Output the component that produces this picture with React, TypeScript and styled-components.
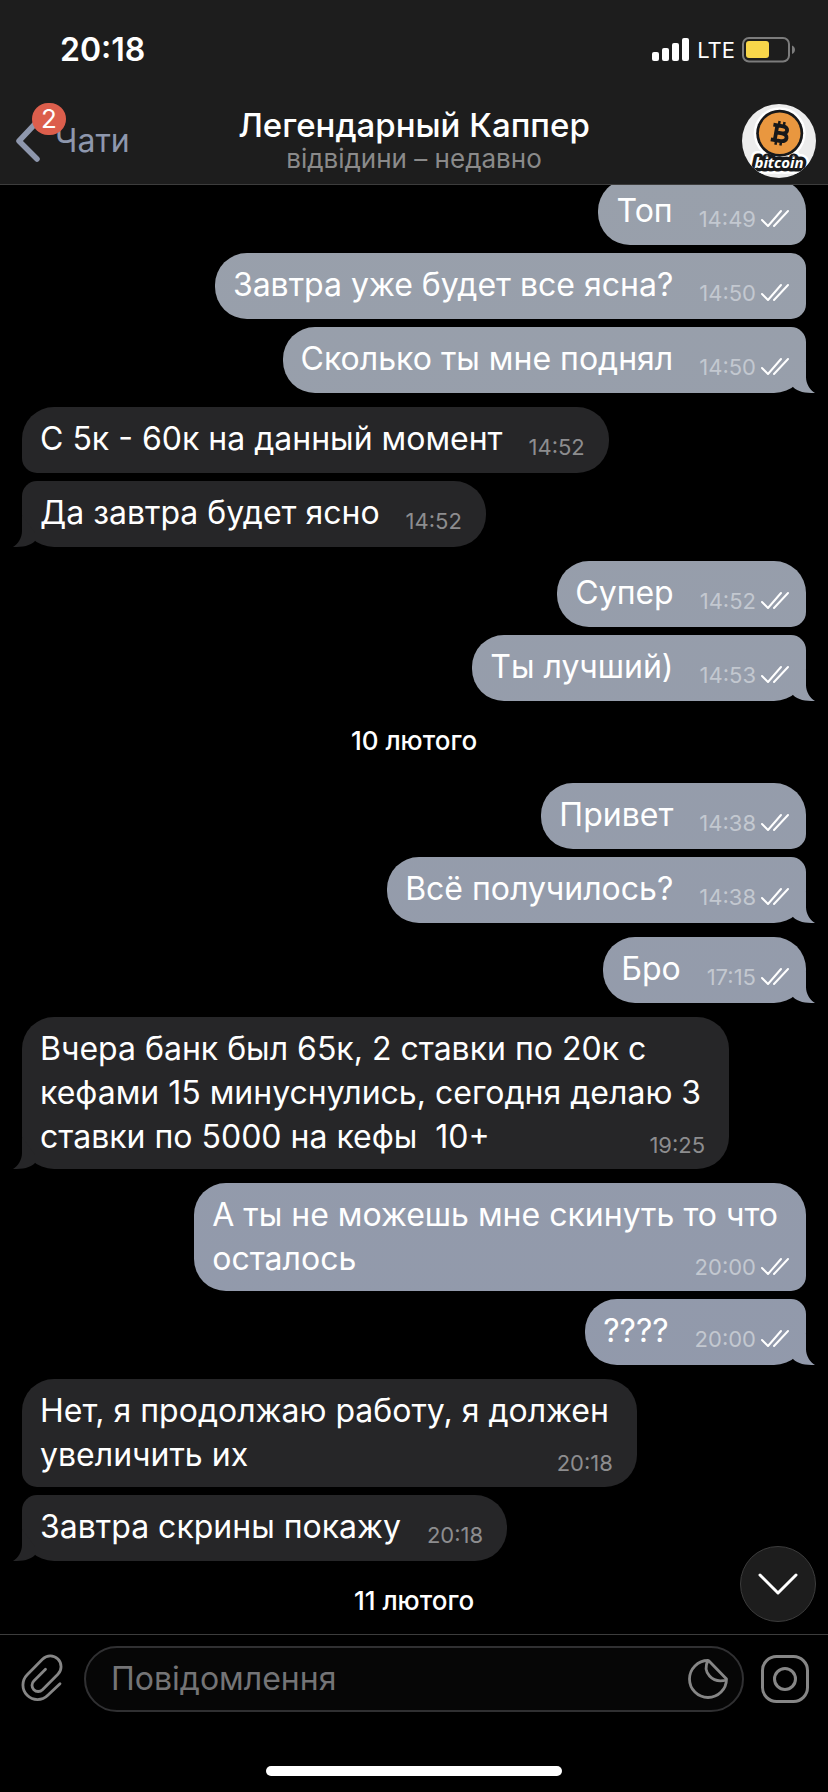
import React from "react";
import styled, { createGlobalStyle, css } from "styled-components";

const GlobalStyle = createGlobalStyle`
  *, *::before, *::after { box-sizing: border-box; }
  body { margin: 0; background: #000; }
  button, input { font: inherit; }
`;

const outgoingFill = "linear-gradient(180deg, #9aa1ab 0%, #8f97ab 100%) fixed";
const incomingFill = "#262628";

const Screen = styled.div`
  display: flex;
  flex-direction: column;
  height: 100vh;
  overflow: hidden;
  background: #000;
  color: #fff;
  font-family: Inter, "Liberation Sans", sans-serif;
  font-size: 32px;
  line-height: 44px;
`;

const TopBar = styled.header`
  flex: none;
  background: #1d1d1d;
  border-bottom: 1px solid #3d3d3d;
`;

const StatusBar = styled.div`
  display: flex;
  align-items: center;
  justify-content: space-between;
  height: 98px;
  padding: 2px 32px 0 60px;
`;

const Clock = styled.time`
  font-weight: 600;
`;

const StatusIcons = styled.div`
  display: flex;
  align-items: center;
  gap: 7px;
  font-size: 22px;
`;

const NavBar = styled.nav`
  display: grid;
  grid-template-columns: 1fr auto 1fr;
  align-items: center;
  height: 86px;
  padding: 0 12px;
`;

const BackButton = styled.button`
  position: relative;
  display: flex;
  align-items: center;
  justify-self: start;
  gap: 14px;
  padding: 0 0 0 2px;
  border: 0;
  background: none;
  color: #8e97ad;
  line-height: 44px;
`;

const Badge = styled.span`
  position: absolute;
  left: 20px;
  bottom: 28px;
  min-width: 34px;
  height: 32px;
  border-radius: 16px;
  background: #dc5e4c;
  color: #fff;
  font-size: 26px;
  line-height: 32px;
  text-align: center;
`;

const Heading = styled.div`
  text-align: center;
`;

const Title = styled.h1`
  margin: 0;
  font-size: 33px;
  font-weight: 500;
  line-height: 36px;
`;

const Subtitle = styled.p`
  margin: 0;
  color: #8a8a8a;
  font-size: 26px;
  line-height: 32px;
`;

const AvatarLink = styled.a`
  justify-self: end;
  display: flex;
`;

const History = styled.main`
  position: relative;
  flex: 1;
  min-height: 0;
  display: flex;
  flex-direction: column;
  justify-content: flex-end;
  padding: 0 22px 11px;
  overflow: hidden;
`;

const DateLabel = styled.h2`
  flex: none;
  margin: 4px 0 20px;
  font-size: 26px;
  font-weight: 500;
  line-height: 44px;
  text-align: center;

  &:nth-last-child(2) { margin-bottom: 0; }
`;

const tailOut = `path("M21 2V18C21 25 25 31 30 34C20 34 13 33 8 28V20Z")`;
const tailIn = `path("M9 2V18C9 25 5 31 0 34C10 34 17 33 22 28V20Z")`;

const Bubble = styled.article<{ $out: boolean; $first: boolean; $last: boolean }>`
  position: relative;
  flex: none;
  align-self: ${(p) => (p.$out ? "flex-end" : "flex-start")};
  min-height: 66px;
  margin-bottom: ${(p) => (p.$last ? 14 : 8)}px;
  padding: 10px ${(p) => (p.$out ? 16 : 24)}px 10px 18px;
  background: ${(p) => (p.$out ? outgoingFill : incomingFill)};
  border-radius: ${(p) => {
    const top = p.$first ? 32 : 15;
    const bottom = p.$last ? 32 : 15;
    return p.$out ? `32px ${top}px ${bottom}px 32px` : `${top}px 32px 32px ${bottom}px`;
  }};

  ${(p) =>
    p.$last &&
    css`
      &::after {
        content: "";
        position: absolute;
        bottom: 0;
        ${p.$out ? "right" : "left"}: -9px;
        width: 30px;
        height: 34px;
        background: ${p.$out ? outgoingFill : incomingFill};
        clip-path: ${p.$out ? tailOut : tailIn};
      }
    `}
`;

const MessageText = styled.p<{ $inset?: number }>`
  margin: 0;
  padding-right: ${(p) => p.$inset ?? 0}px;
  white-space: pre-wrap;
`;

const LastRow = styled.div`
  display: flex;
  align-items: flex-end;
  justify-content: space-between;
  gap: 26px;
`;

const Meta = styled.div<{ $out: boolean }>`
  flex: none;
  display: flex;
  align-items: center;
  gap: 4px;
  color: ${(p) => (p.$out ? "#c3c8d0" : "#8d8d8f")};
  font-size: 22px;
  line-height: 28px;
`;

const ScrollDown = styled.button`
  position: absolute;
  right: 12px;
  bottom: 12px;
  display: grid;
  place-items: center;
  width: 76px;
  height: 76px;
  padding: 0;
  border: 1px solid #3c3c3c;
  border-radius: 50%;
  background: #1d1d1d;
`;

const Composer = styled.form`
  flex: none;
  display: flex;
  align-items: center;
  gap: 17px;
  padding: 11px 19px 54px 17px;
  border-top: 1px solid #3d3d3d;
`;

const IconButton = styled.button`
  flex: none;
  display: flex;
  padding: 0;
  border: 0;
  background: none;
  color: #868686;
`;

const Field = styled.div`
  flex: 1;
  min-width: 0;
  display: flex;
  align-items: center;
  height: 66px;
  padding: 0 14px 0 25px;
  border: 2px solid #303032;
  border-radius: 33px;
  background: #060606;
`;

const MessageInput = styled.input`
  flex: 1;
  min-width: 0;
  padding: 0;
  border: 0;
  outline: 0;
  background: none;
  color: #fff;
  line-height: 44px;

  &::placeholder { color: #747476; opacity: 1; }
`;

const HomeIndicator = styled.div`
  flex: none;
  align-self: center;
  width: 296px;
  max-width: 36%;
  height: 10px;
  margin-bottom: 16px;
  border-radius: 5px;
  background: #fff;
`;

const Ticks = () => (
  <svg width="30" height="20" viewBox="0 0 30 20" fill="none" stroke="#fff" strokeWidth="2" strokeLinecap="round" strokeLinejoin="round" aria-label="Прочитано">
    <path d="M2 11L8 17L21 2M14 17L28 2" />
  </svg>
);

const SignalIcon = () => (
  <svg width="38" height="24" viewBox="0 0 38 24" fill="#fff" aria-hidden="true">
    <rect x="0" y="14" width="7" height="9" rx="2" />
    <rect x="10" y="10" width="7" height="13" rx="2" />
    <rect x="20" y="5" width="7" height="18" rx="2" />
    <rect x="30" y="0" width="7" height="23" rx="2" />
  </svg>
);

const BatteryIcon = () => (
  <svg width="54" height="26" viewBox="0 0 54 26" fill="none" aria-hidden="true">
    <rect x="1" y="1" width="46" height="23.5" rx="6" stroke="#7c7c7c" strokeWidth="2" />
    <rect x="4" y="4" width="23" height="17" rx="3" fill="#f8d64a" />
    <path d="M50 8.500C54 10 54 15.500 50 17Z" fill="#7c7c7c" />
  </svg>
);

const BackIcon = () => (
  <svg width="27" height="42" viewBox="0 0 27 42" fill="none" stroke="currentColor" strokeWidth="5.500" strokeLinecap="round" aria-hidden="true">
    <path d="M21 4L5 21L23 39" strokeLinejoin="round" />
  </svg>
);

const Avatar = () => (
  <svg width="74" height="74" viewBox="0 0 74 74" role="img" aria-label="bitcoin">
    <clipPath id="avatar-disc">
      <circle cx="37" cy="37" r="37" />
    </clipPath>
    <g clipPath="url(#avatar-disc)">
      <rect width="74" height="74" fill="#ececec" />
      <circle cx="37.700" cy="29.300" r="26" fill="#fff" />
      <text x="37" y="64" textAnchor="middle" fontFamily="Open Sans, sans-serif" fontWeight="700" fontStyle="italic" fontSize="15" stroke="#fff" strokeWidth="12" strokeLinejoin="round">bitcoin</text>
      <circle cx="37.700" cy="29.300" r="23.500" fill="#17181a" />
      <circle cx="37.700" cy="29.300" r="20.800" fill="#e9973f" />
      <g transform="translate(38 29.300) rotate(10)" fill="none" stroke="#17181a" strokeWidth="3.800">
        <path d="M-8 -7.500H2C8 -7.500 8 -0.300 2 -0.300H-4M2 -0.300C9 -0.300 9 7.500 2 7.500H-8M-4 -7.500V7.500" />
        <path d="M-2.500 -12V-8M2.500 -12V-8M-2.500 8V12M2.500 8V12" strokeWidth="2.500" />
      </g>
      <text x="37" y="64" textAnchor="middle" fontFamily="Open Sans, sans-serif" fontWeight="700" fontStyle="italic" fontSize="15" fill="#fff" stroke="#17181a" strokeWidth="7" strokeLinejoin="round" paintOrder="stroke">bitcoin</text>
    </g>
  </svg>
);

const ClipIcon = () => (
  <svg width="50" height="50" viewBox="0 0 50 50" fill="none" stroke="currentColor" strokeWidth="2.800" strokeLinecap="round" strokeLinejoin="round" aria-hidden="true">
    <path d="M43 29.700L30.800 41.300A14.500 14.500 0 0 1 10.200 20.700L25.700 5.100A10.700 10.700 0 0 1 40.900 20.300L25.500 35.700A6.150 6.150 0 0 1 16.800 27L28.500 15.300" />
  </svg>
);

const StickerIcon = () => (
  <svg width="40" height="40" viewBox="0 0 40 40" fill="none" stroke="currentColor" strokeWidth="2.800" strokeLinejoin="round" aria-hidden="true">
    <path d="M20 1.500A18.500 18.500 0 1 0 38.500 20L21.500 2.500Q20.800 1.500 20 1.500C14 13 24 25 38.500 21" />
  </svg>
);

const CameraIcon = () => (
  <svg width="48" height="48" viewBox="0 0 48 48" fill="none" stroke="currentColor" strokeWidth="3" aria-hidden="true">
    <rect x="1.500" y="1.500" width="45" height="45" rx="14" />
    <circle cx="24" cy="24" r="10.500" />
  </svg>
);

const DownIcon = () => (
  <svg width="40" height="24" viewBox="0 0 40 24" fill="none" stroke="#fff" strokeWidth="3" strokeLinecap="round" strokeLinejoin="round" aria-hidden="true">
    <path d="M2 3L20 21L38 3" />
  </svg>
);

type Message = { lines: string[]; time: string; out?: boolean; first?: boolean; last?: boolean };
type Entry = Message | { date: string };

const entries: Entry[] = [
  { lines: ["Топ"], time: "14:49", out: true, first: true },
  { lines: ["Завтра уже будет все ясна?"], time: "14:50", out: true },
  { lines: ["Сколько ты мне поднял"], time: "14:50", out: true, last: true },
  { lines: ["С 5к - 60к на данный момент"], time: "14:52", first: true },
  { lines: ["Да завтра будет ясно"], time: "14:52", last: true },
  { lines: ["Супер"], time: "14:52", out: true, first: true },
  { lines: ["Ты лучший)"], time: "14:53", out: true, last: true },
  { date: "10 лютого" },
  { lines: ["Привет"], time: "14:38", out: true, first: true },
  { lines: ["Всё получилось?"], time: "14:38", out: true, last: true },
  { lines: ["Бро"], time: "17:15", out: true, first: true, last: true },
  {
    lines: [
      "Вчера банк был 65к, 2 ставки по 20к с",
      "кефами 15 минуснулись, сегодня делаю 3",
      "ставки по 5000 на кефы  10+",
    ],
    time: "19:25",
    first: true,
    last: true,
  },
  { lines: ["А ты не можешь мне скинуть то что", "осталось"], time: "20:00", out: true, first: true },
  { lines: ["????"], time: "20:00", out: true, last: true },
  { lines: ["Нет, я продолжаю работу, я должен", "увеличить их"], time: "20:18", first: true },
  { lines: ["Завтра скрины покажу"], time: "20:18", last: true },
  { date: "11 лютого" },
];

function MessageBubble({ lines, time, out = false, first = false, last = false }: Message) {
  const lead = lines.slice(0, -1).join("\n");
  return (
    <Bubble $out={out} $first={first} $last={last}>
      {lead && <MessageText $inset={out ? 12 : 4}>{lead}</MessageText>}
      <LastRow>
        <MessageText>{lines[lines.length - 1]}</MessageText>
        <Meta $out={out}>
          <time>{time}</time>
          {out && <Ticks />}
        </Meta>
      </LastRow>
    </Bubble>
  );
}

export default function App() {
  return (
    <Screen>
      <GlobalStyle />
      <TopBar>
        <StatusBar>
          <Clock>20:18</Clock>
          <StatusIcons>
            <SignalIcon />
            <span>LTE</span>
            <BatteryIcon />
          </StatusIcons>
        </StatusBar>
        <NavBar>
          <BackButton type="button">
            <BackIcon />
            <span>Чати</span>
            <Badge>2</Badge>
          </BackButton>
          <Heading>
            <Title>Легендарный Каппер</Title>
            <Subtitle>відвідини – недавно</Subtitle>
          </Heading>
          <AvatarLink href="#profile">
            <Avatar />
          </AvatarLink>
        </NavBar>
      </TopBar>
      <History>
        {entries.map((entry, i) =>
          "date" in entry ? <DateLabel key={i}>{entry.date}</DateLabel> : <MessageBubble key={i} {...entry} />
        )}
        <ScrollDown type="button" aria-label="Донизу">
          <DownIcon />
        </ScrollDown>
      </History>
      <Composer onSubmit={(e) => e.preventDefault()}>
        <IconButton type="button" aria-label="Прикріпити">
          <ClipIcon />
        </IconButton>
        <Field>
          <MessageInput type="text" placeholder="Повідомлення" aria-label="Повідомлення" />
          <IconButton type="button" aria-label="Стікери">
            <StickerIcon />
          </IconButton>
        </Field>
        <IconButton type="button" aria-label="Камера">
          <CameraIcon />
        </IconButton>
      </Composer>
      <HomeIndicator />
    </Screen>
  );
}
